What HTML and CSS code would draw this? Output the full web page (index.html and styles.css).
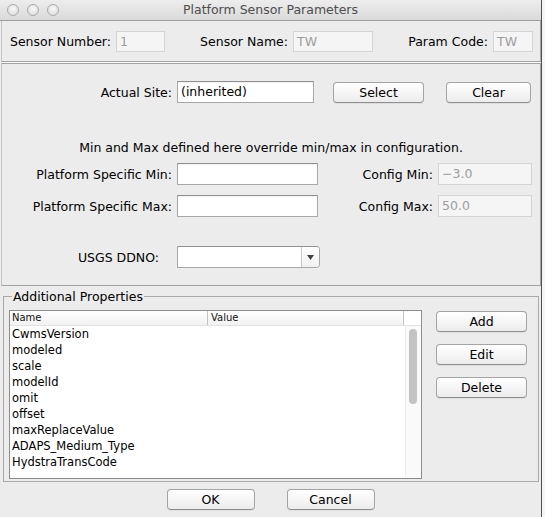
FILE: index.html
```html
<!DOCTYPE html>
<html>
<head>
<meta charset="utf-8">
<title>Platform Sensor Parameters</title>
<link rel="stylesheet" href="styles.css">
</head>
<body>
<div class="window">
  <div class="titlebar">
    <div class="lights"><span class="light"></span><span class="light"></span><span class="light"></span></div>
    <div class="title">Platform Sensor Parameters</div>
    <div></div>
  </div>

  <div class="panel top-panel">
    <span class="lbl l-num">Sensor Number:</span><div class="field dis w-num">1</div>
    <span class="lbl l-name">Sensor Name:</span><div class="field dis w-name">TW</div>
    <span class="lbl l-code">Param Code:</span><div class="field dis w-code">TW</div>
  </div>

  <div class="panel mid-panel">
    <div class="row r-site">
      <span class="lbl lcol">Actual Site:</span>
      <div class="field w-site">(inherited)</div>
      <button class="btn b-select">Select</button>
      <button class="btn b-clear">Clear</button>
    </div>
    <div class="note">Min and Max defined here override min/max in configuration.</div>
    <div class="row r-min">
      <span class="lbl lcol">Platform Specific Min:</span>
      <div class="field w-plat"></div>
      <span class="lbl l-cfg">Config Min:</span>
      <div class="field dis w-cfg">&minus;3.0</div>
    </div>
    <div class="row r-max">
      <span class="lbl lcol">Platform Specific Max:</span>
      <div class="field w-plat"></div>
      <span class="lbl l-cfg">Config Max:</span>
      <div class="field dis w-cfg">50.0</div>
    </div>
    <div class="row r-usgs">
      <span class="lbl l-usgs">USGS DDNO:</span>
      <div class="combo">
        <div class="combo-text"></div>
        <div class="combo-arrow"><svg width="7" height="5" viewBox="0 0 7 5"><path d="M0 0 H7 L3.5 5 Z" fill="#444"/></svg></div>
      </div>
    </div>
  </div>

  <fieldset class="props">
    <legend>Additional Properties</legend>
    <div class="props-body">
      <div class="table">
        <div class="thead">
          <div class="th th-name">Name</div>
          <div class="th th-value">Value</div>
          <div class="th th-end"></div>
        </div>
        <div class="tbody">
          <div class="rows">
            <div class="tr">CwmsVersion</div>
            <div class="tr">modeled</div>
            <div class="tr">scale</div>
            <div class="tr">modelId</div>
            <div class="tr">omit</div>
            <div class="tr">offset</div>
            <div class="tr">maxReplaceValue</div>
            <div class="tr">ADAPS_Medium_Type</div>
            <div class="tr">HydstraTransCode</div>
          </div>
          <div class="vscroll"><div class="thumb"></div></div>
        </div>
      </div>
      <div class="side-btns">
        <button class="btn sbtn">Add</button>
        <button class="btn sbtn">Edit</button>
        <button class="btn sbtn">Delete</button>
      </div>
    </div>
  </fieldset>

  <div class="footer">
    <button class="btn fbtn">OK</button>
    <button class="btn fbtn">Cancel</button>
  </div>
</div>
</body>
</html>
```

FILE: styles.css
```css
* { box-sizing: border-box; }
html, body { margin: 0; padding: 0; }
body {
  background: #f5f5f5;
  font-family: "DejaVu Sans", sans-serif;
  font-size: 12.5px;
  color: #000;
}
.window {
  width: 542px;
  height: 517px;
  background: #ececec;
  border-right: 1px solid #505050;
  display: flex;
  flex-direction: column;
  overflow: hidden;
}

/* title bar */
.titlebar {
  flex: none;
  height: 21px;
  display: grid;
  grid-template-columns: 1fr auto 1fr;
  align-items: center;
  background: linear-gradient(#ededed, #dadada);
  border-bottom: 1px solid #9c9c9c;
}
.lights { display: flex; gap: 8px; padding-left: 7px; }
.light {
  width: 12px; height: 12px; border-radius: 50%;
  border: 1px solid #ababab;
  background: radial-gradient(circle at 50% 40%, #fafafa 0%, #e4e4e4 60%, #d6d6d6 100%);
}
.title { color: #4d4d4d; line-height: 20px; }

/* panels */
.panel {
  margin-left: 1px;
  border: 1px solid #a3a3a3;
  border-left-color: #c4c4c4;
}
.top-panel {
  flex: none;
  height: 41px;
  border-top: none;
  display: flex;
  align-items: center;
  box-shadow: 0 1px 0 #fbfbfb;
}
.lbl { white-space: nowrap; }
.l-num { width: 109px; text-align: right; }
.l-name { width: 123px; text-align: right; }
.l-code { width: 115px; text-align: right; }

.field {
  height: 22px;
  background: #fff;
  border: 1px solid #a8a8a8;
  border-top-color: #8f8f8f;
  box-shadow: inset 0 1px 1px rgba(0,0,0,0.06);
  margin-left: 5px;
  padding: 0 3px;
  line-height: 20px;
  white-space: nowrap;
  overflow: hidden;
}
.field.dis {
  background: #f5f5f5;
  border-color: #d4d4d4;
  box-shadow: none;
  color: #9d9d9d;
}
.top-panel .field { height: 21px; line-height: 19px; }
.w-num { width: 49px; }
.w-name { width: 80px; }
.w-code { width: 40px; }

.mid-panel {
  flex: none;
  margin-top: 1px;
  height: 223px;
  padding-top: 17px;
}
.row { display: flex; align-items: center; }
.lcol { width: 170px; text-align: right; }
.w-site { width: 137px; }
.w-plat { width: 141px; }
.l-cfg { width: 115px; text-align: right; }
.w-cfg { width: 94px; }
.l-usgs { width: 157px; text-align: right; }

.note {
  text-align: center;
  margin-top: 37px;
  line-height: 15px;
}
.r-min { margin-top: 8px; }
.r-max { margin-top: 10px; }
.r-usgs { margin-top: 29px; }

.combo {
  margin-left: 18px;
  width: 143px;
  height: 22px;
  display: flex;
  background: #fff;
  border: 1px solid #a8a8a8;
  border-top-color: #939393;
  border-radius: 0 4px 4px 0;
}
.combo-text { flex: 1; }
.combo-arrow {
  width: 18px;
  border-left: 1px solid #c9c9c9;
  display: flex;
  align-items: center;
  justify-content: center;
  background: linear-gradient(#ffffff, #f1f1f1);
  border-radius: 0 3px 3px 0;
}

/* buttons */
.btn {
  font-family: "DejaVu Sans", sans-serif;
  font-size: 12.5px;
  color: #000;
  height: 21px;
  padding: 0;
  border: 1px solid #a4a4a4;
  border-bottom-color: #8f8f8f;
  border-radius: 4px;
  background: linear-gradient(#ffffff, #f6f6f6 50%, #ececec);
  box-shadow: 0 1px 0 rgba(0,0,0,0.06);
  line-height: 19px;
}
.b-select { width: 91px; margin-left: 19px; }
.b-clear { width: 85px; margin-left: 22px; }

/* additional properties */
.props {
  flex: none;
  margin: 3px 0 0 3px;
  width: 536px;
  height: 193px;
  padding: 6px 0 0 5px;
  border: 1px solid #a9a9a9;
  min-inline-size: 0;
}
.props legend {
  padding: 0 1px;
  margin-left: 3px;
  line-height: 15px;
}
.props-body { display: flex; align-items: flex-start; }
.table {
  width: 413px;
  height: 169px;
  border: 1px solid #8c8c8c;
  background: #fff;
  display: flex;
  flex-direction: column;
  overflow: hidden;
}
.thead {
  flex: none;
  height: 15px;
  display: flex;
  font-size: 10px;
  line-height: 14px;
  background: linear-gradient(#ffffff, #f2f2f2);
  border-bottom: 1px solid #e2e2e2;
}
.th { padding-left: 2px; color: #111; }
.th-name { width: 198px; border-right: 1px solid #c3c3c3; }
.th-value { width: 196px; border-right: 1px solid #c3c3c3; padding-left: 3px; }
.th-end { flex: 1; background: #fff; }
.tbody { flex: 1; display: flex; overflow: hidden; }
.rows { flex: 1; overflow: hidden; }
.tr {
  height: 16px;
  line-height: 16px;
  font-size: 11.5px;
  padding-left: 2px;
  white-space: nowrap;
}
.vscroll {
  width: 16px;
  border-left: 1px solid #eeeeee;
  background: #fafafa;
  padding: 3px 0 0 3px;
}
.thumb {
  width: 8px;
  height: 75px;
  border-radius: 4px;
  background: #c3c3c3;
}
.side-btns {
  margin-left: 14px;
  margin-top: 1px;
  display: flex;
  flex-direction: column;
  gap: 12px;
}
.sbtn { width: 91px; }

.footer {
  flex: none;
  display: flex;
  justify-content: center;
  gap: 32px;
  margin-top: 7px;
}
.fbtn { width: 88px; }
```
